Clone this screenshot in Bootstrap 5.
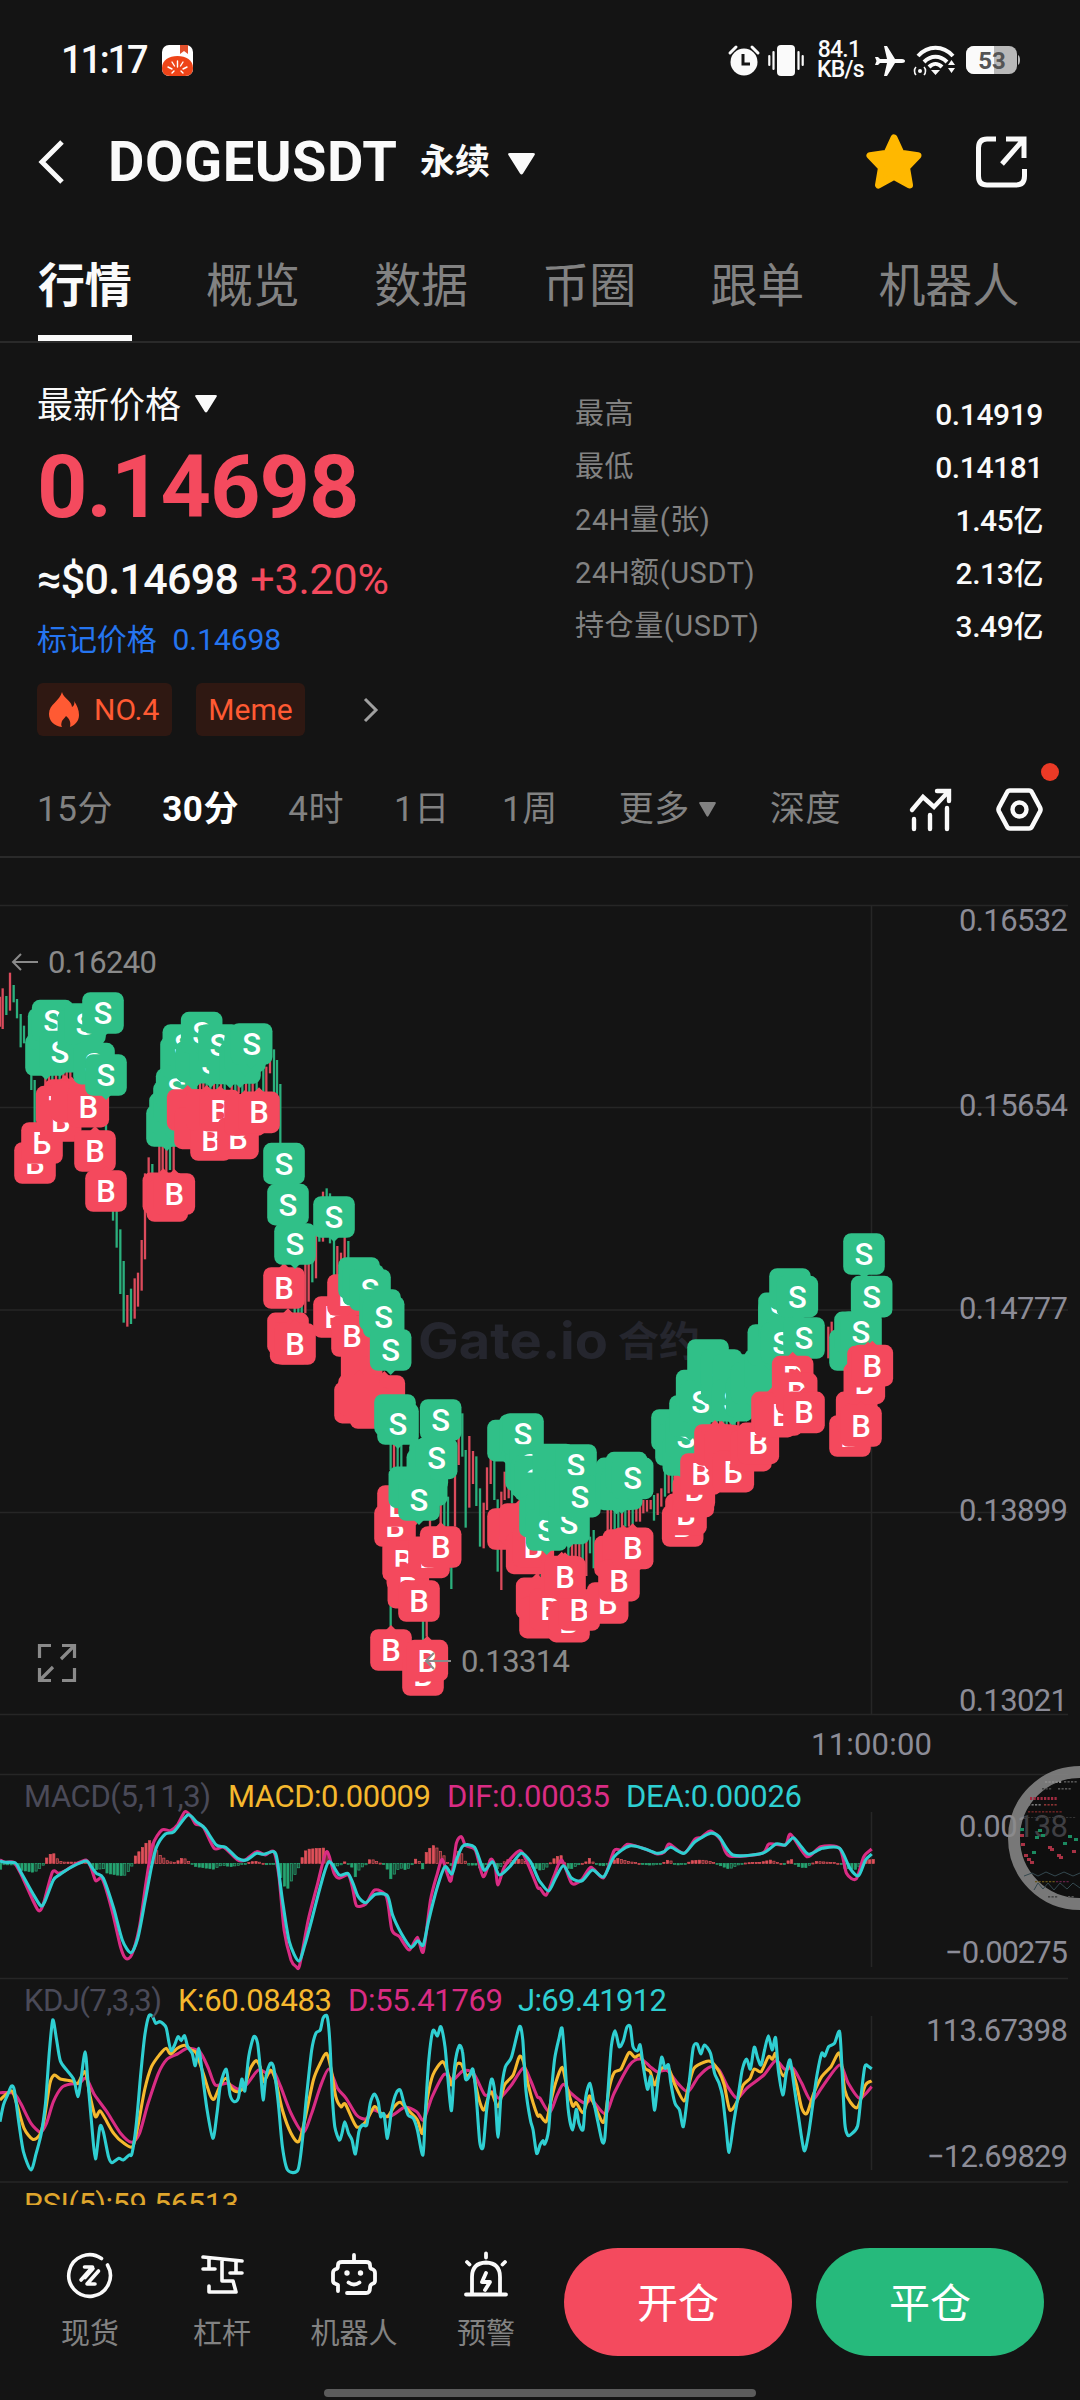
<!DOCTYPE html>
<html lang="zh-CN">
<head>
<meta charset="utf-8">
<meta name="viewport" content="width=device-width, initial-scale=1">
<title>DOGEUSDT 永续</title>
<link href="https://cdn.jsdelivr.net/npm/bootstrap@5.3.0/dist/css/bootstrap.min.css" rel="stylesheet">
<style>
:root{--ink:#141414;--up:#f44a5e;--down:#26ba7c;--dim:#828282}
body{background:var(--ink);color:#fafafa;font-family:Roboto,"Noto Sans CJK SC",sans-serif;width:1080px;height:2400px;overflow:hidden;line-height:1}
svg{display:block;overflow:visible}
.dim{color:var(--dim)}
.statusbar{height:112px;padding:8px 60px 0 61px}
.clock{font-size:38px;letter-spacing:-2.2px;font-weight:500;width:85px;white-space:nowrap}
.netspeed{font-size:23px;line-height:20px;width:44px;font-weight:500;letter-spacing:-.8px}
.titlebar{height:98px;padding:2px 53px 0 38px}
.pair{font-size:56px;font-weight:700;letter-spacing:.5px;margin-left:43px;line-height:60px;width:299px;white-space:nowrap}
.kind{font-size:35px;font-weight:700;margin-left:13px}
.maintabs{height:133px;gap:74.500px;padding:50px 0 0 38px;border-bottom:2px solid #2a2a2a;font-size:47px}
.maintabs div{height:81px;line-height:52px;white-space:nowrap;letter-spacing:-.2px}
.maintabs .on{color:#fafafa;font-weight:700;border-bottom:6px solid #fafafa}
.quote{height:413px;padding:0 37px 0 37px}
.lefthalf{width:538px}
.lastlbl{font-size:36px;line-height:44px;margin-top:41px;gap:14px}
.bigprice{font-size:88px;font-weight:700;line-height:88px;color:var(--up);margin-top:15px;letter-spacing:-1px}
.usd{font-size:43px;line-height:50px;margin-top:23px;gap:12px;font-weight:500}
.usd span{letter-spacing:-.7px}
.usd span+span{letter-spacing:-.2px}
.mark-row{font-size:30px;line-height:36px;margin-top:18px;gap:16px;color:#2575f0;letter-spacing:-.1px}
.tags{margin-top:25px}
.tagbox{height:53px;border-radius:6px;background:#2f1812;color:#ff5a33;font-size:30px}
.stats{margin-top:45px;font-size:29px}
.stats .d-flex{height:53px;line-height:53px}
.stats span:first-child{letter-spacing:.6px}
.stats span:last-child{font-weight:500;font-size:30px;letter-spacing:-.4px}
.periods{height:102px;border-bottom:2px solid #2a2a2a;font-size:35px;letter-spacing:.6px;padding:6px 37px 0 37px;white-space:nowrap}
.reddot{width:18px;height:18px;border-radius:50%;background:#ea3a26;right:-16px;top:-25px}
.charts{height:1347px;overflow:hidden}
.footbar{height:195px;padding:43px 36px 0 24px}
.navcell{width:132px;font-size:29px;color:var(--dim);white-space:nowrap}
.navcell svg{margin:4px 0 22px}
.pillbtn{width:228px;height:108px;border-radius:54px;color:#fff;font-size:41px;padding-top:4px}
.homebar{position:absolute;left:324px;top:2389px;width:432px;height:8px;border-radius:4px;background:#5c5c5c}
.phone{width:1080px;height:2400px;overflow:hidden}
.bubble{left:1008px;top:1766px}
</style>
<script src="https://cdn.jsdelivr.net/npm/bootstrap@5.3.0/dist/js/bootstrap.bundle.min.js"></script>
</head>
<body>
<div class="phone position-relative d-flex flex-column">

  <header class="statusbar d-flex align-items-center justify-content-between">
    <div class="d-flex align-items-center">
      <span class="clock">11:17</span>
      <svg class="ms-3" width="31" height="31" viewBox="0 0 31 31"><rect width="31" height="31" rx="7" fill="#fff"/><path d="M18 0h8v9l-4-3-4 3z" fill="#e2502c"/><path d="M0 23C0 15 7 11 15.500 11S31 15 31 23c0 5-3 8-8 8H8c-5 0-8-3-8-8z" fill="#ee4418"/><path d="M15.500 16v6M10 17l2.500 4M21 17l-2.500 4M6 22l4 2M25 22l-4 2M10 28l2-2M21 28l-2-2" stroke="#fff" stroke-width="1.400" stroke-linecap="round"/></svg>
    </div>
    <div class="d-flex align-items-center">
      <svg width="32" height="31" viewBox="0 0 32 31"><circle cx="16" cy="17" r="13.500" fill="#fafafa"/><path d="M2 8l6-6M30 8l-6-6" stroke="#fafafa" stroke-width="3" stroke-linecap="round"/><path d="M15 9v10h7" fill="none" stroke="#141414" stroke-width="3"/></svg>
      <svg style="margin-left:8px" width="36" height="31" viewBox="0 0 36 31"><rect x="9" y="0" width="18" height="31" rx="4" fill="#fafafa"/><path d="M5.500 7v17M30.500 7v17M1.300 11v9M34.700 11v9" stroke="#fafafa" stroke-width="2.200" stroke-linecap="round"/></svg>
      <div class="netspeed text-center" style="margin-left:13px">84.1<br>KB/s</div>
      <svg style="margin-left:14px" width="30" height="31" viewBox="0 0 30 31"><path d="M0 12l3 0 2 2h7L9 1h3l8 13h7c4 0 4 4 0 4h-7l-8 13H9l3-13H5l-2 2H0l1.500-4z" fill="#fafafa"/></svg>
      <svg style="margin-left:9px" width="42" height="31" viewBox="0 0 42 31"><g fill="none" stroke="#fafafa" stroke-width="4"><path d="M4 11c10-11 25-11 35 0M10 17c7-7 16-7 23 0M15 22c4-4 9-4 13 0"/></g><path d="M17 25h9l-4.500 5zM34 20l3.500-5 3.500 5zM34 23l3.500 5 3.500-5z" fill="#fafafa"/><circle cx="6" cy="26" r="2" fill="#fafafa"/><path d="M2 22c-2 2-2 6 0 8M10 22c2 2 2 6 0 8" fill="none" stroke="#fafafa" stroke-width="1.600"/></svg>
      <svg style="margin-left:10px" width="54" height="28" viewBox="0 0 54 28"><rect width="51" height="28" rx="8" fill="#b9b9b9"/><path d="M8 0h20v28H8a8 8 0 01-8-8V8a8 8 0 018-8z" fill="#fafafa"/><path d="M52 9q2 1 2 5t-2 5z" fill="#b9b9b9"/><text x="26" y="22.500" text-anchor="middle" font-size="24" font-weight="700" fill="#555">53</text></svg>
    </div>
  </header>

  <div class="titlebar d-flex align-items-center">
    <svg width="27" height="44" viewBox="0 0 27 44"><path d="M24 2L4 22l20 20" fill="none" stroke="#fafafa" stroke-width="5"/></svg>
    <span class="pair">DOGEUSDT</span>
    <span class="kind">永续</span>
    <svg style="margin-left:18px;margin-top:4px" width="27" height="22" viewBox="0 0 27 22"><path d="M2 0h23q3 0 1.300 2.500L15 20.500q-1.500 2-3 0L.7 2.500Q-1 0 2 0z" fill="#fafafa"/></svg>
    <svg class="ms-auto" width="58" height="57" viewBox="0 0 58 57"><path d="M29 4l7 15.200L53 21.600 41.500 33.500 44.500 51 29 42.500 13.500 51l3-17.500L5 21.600l17-2.400z" fill="#ffb800" stroke="#ffb800" stroke-width="7" stroke-linejoin="round"/></svg>
    <svg style="margin-left:53px" width="51" height="52" viewBox="0 0 51 52"><path d="M20 3H11q-8.500 0-8.500 9v28q0 9 8.500 9h29q8.500 0 8.500-9v-7M30 3h18v19M47 4L26 28" fill="none" stroke="#fafafa" stroke-width="5"/></svg>
  </div>

  <nav class="maintabs d-flex dim">
    <div class="on">行情</div><div>概览</div><div>数据</div><div>币圈</div><div>跟单</div><div>机器人</div>
  </nav>

  <section class="quote d-flex">
    <div class="lefthalf">
      <div class="lastlbl d-flex align-items-center">最新价格 <svg style="margin-top:-4px" width="22" height="18" viewBox="0 0 27 22"><path d="M2 0h23q3 0 1.300 2.500L15 20.500q-1.500 2-3 0L.7 2.500Q-1 0 2 0z" fill="#fafafa"/></svg></div>
      <div class="bigprice">0.14698</div>
      <div class="usd d-flex"><span>≈$0.14698</span><span style="color:var(--up)" class="fw-normal">+3.20%</span></div>
      <div class="mark-row d-flex"><span>标记价格</span><span>0.14698</span></div>
      <div class="tags d-flex align-items-center">
        <div class="tagbox d-flex align-items-center" style="padding:0 13px 0 12px;gap:15px">
          <svg width="30" height="35" viewBox="0 0 30 35"><path d="M13 0c1 6 10 9 10 15 2-1 3-4 2-6 3 4 5 9 5 14 0 6-4 10-9 12 1-4 0-8-4-11-1 2-3 3-4 5-1 3-1 4 0 6C5 34 0 29 0 22 0 12 11 9 13 0z" fill="#ff5a33"/></svg>
          <span>NO.4</span></div>
        <div class="tagbox d-flex align-items-center" style="margin-left:24px;padding:0 12px">Meme</div>
        <svg style="margin-left:58px" width="15" height="24" viewBox="0 0 15 24"><path d="M2 1l11 11L2 23" fill="none" stroke="#a0a0a0" stroke-width="3"/></svg>
      </div>
    </div>
    <div class="stats flex-grow-1">
      <div class="d-flex justify-content-between"><span class="dim">最高</span><span>0.14919</span></div>
      <div class="d-flex justify-content-between"><span class="dim">最低</span><span>0.14181</span></div>
      <div class="d-flex justify-content-between"><span class="dim">24H量(张)</span><span>1.45亿</span></div>
      <div class="d-flex justify-content-between"><span class="dim">24H额(USDT)</span><span>2.13亿</span></div>
      <div class="d-flex justify-content-between"><span class="dim">持仓量(USDT)</span><span>3.49亿</span></div>
    </div>
  </section>

  <nav class="periods d-flex align-items-center dim">
    <span>15分</span><span class="fw-bold text-white" style="margin-left:49px">30分</span><span style="margin-left:49px">4时</span><span style="margin-left:50px">1日</span><span style="margin-left:52px">1周</span>
    <span style="margin-left:61px">更多</span><svg style="margin-left:9px" width="17" height="15" viewBox="0 0 27 22" preserveAspectRatio="none"><path d="M2 0h23q3 0 1.300 2.500L15 20.500q-1.500 2-3 0L.7 2.500Q-1 0 2 0z" fill="#828282"/></svg>
    <span style="margin-left:54px">深度</span>
    <svg class="ms-auto" width="42" height="43" viewBox="0 0 42 43"><path d="M2 22L13 9l11 10L38 4M27 3h12v10M4 31v10M20 27v14M37 20v21" fill="none" stroke="#fafafa" stroke-width="4.400" stroke-linecap="round"/></svg>
    <span class="position-relative" style="margin-left:44px"><svg width="47" height="43" viewBox="0 0 47 43"><path d="M14 2.500h19q2 0 3 2l8 15q1 2 0 4l-8 15q-1 2-3 2H14q-2 0-3-2l-8-15q-1-2 0-4l8-15q1-2 3-2z" fill="none" stroke="#fafafa" stroke-width="4.600"/><circle cx="23.500" cy="21.500" r="7" fill="none" stroke="#fafafa" stroke-width="4.400"/></svg><i class="reddot position-absolute"></i></span>
  </nav>

  <main class="charts"><svg id="plot" width="1080" height="1347" viewBox="0 858 1080 1347"></svg></main>

  <footer class="footbar d-flex">
    <div class="navcell d-flex flex-column align-items-center"><svg width="46" height="46" viewBox="0 0 46 46"><g fill="none" stroke="#fafafa" stroke-width="3.600" stroke-linecap="round" stroke-linejoin="round"><path d="M34.500 6.500A20.800 20.800 0 1040.500 13"/><path d="M17.500 15h8L14 28M31.500 19L20 32h8M26 16.500l-8 9"/></g></svg>现货</div>
    <div class="navcell d-flex flex-column align-items-center"><svg width="46" height="46" viewBox="0 0 46 46"><path d="M4 5l39 4M10 6v10M4 17h12M37 9v11M31 21h12M23 7v22h11l3 11H10v-6" fill="none" stroke="#fafafa" stroke-width="3.600" stroke-linecap="round" stroke-linejoin="round"/></svg>杠杆</div>
    <div class="navcell d-flex flex-column align-items-center"><svg width="48" height="46" viewBox="0 0 48 46"><g fill="none" stroke="#fafafa" stroke-width="3.800" stroke-linecap="round"><path d="M24 3v7M8 39v-6l-2-1q-3-1-3-3v-8q0-3 3-4 2 0 2-4 0-3 4-3h24q4 0 4 3 0 4 2 4 3 1 3 4v8q0 2-3 3-2 1-2 4 0 5-4 5H17" stroke-linejoin="round"/><path d="M18.500 30.500q5.500 4 11 0"/></g><circle cx="17" cy="21" r="2.700" fill="#fafafa"/><circle cx="30.500" cy="21" r="2.700" fill="#fafafa"/></svg>机器人</div>
    <div class="navcell d-flex flex-column align-items-center"><svg width="44" height="46" viewBox="0 0 44 46"><path d="M22 1.500v4M3 10l2.500 2.500M41 10l-2.500 2.500M8 41V25q0-14 14-14.500Q36 11 36 25v16M2 42.500h40M22 21l-4 9h8l-5 8" fill="none" stroke="#fafafa" stroke-width="3.800" stroke-linecap="round" stroke-linejoin="round"/></svg>预警</div>
    <div class="pillbtn d-flex align-items-center justify-content-center" style="background:var(--up);margin-left:12px">开仓</div>
    <div class="pillbtn d-flex align-items-center justify-content-center" style="background:var(--down);margin-left:24px">平仓</div>
  </footer>
  <i class="homebar"></i>

  <svg class="bubble position-absolute" width="144" height="144" viewBox="0 0 144 144"><circle cx="72" cy="72" r="60" fill="#0c0c0c" fill-opacity=".6"/><circle cx="72" cy="72" r="66" fill="none" stroke="#8a8a8a" stroke-opacity=".85" stroke-width="12"/><g id="mini"></g></svg>
</div>

<script>
const out = [];
const RED = '#f4495d', GRN = '#30c088', LINE = '#262626';
const put = s => out.push(s);
const hline = y => put(`<path d="M0 ${y}H1068" stroke="${LINE}" stroke-width="1.300"/>`);
const vline = (a, b) => put(`<path d="M871.500 ${a}V${b}" stroke="${LINE}" stroke-width="1.500"/>`);
const label = (x, y, w, t, c) => put(`<text x="${x}" y="${y}" textLength="${w}" font-size="31" fill="${c}">${t}</text>`);

/* grid */
[905.5, 1107.5, 1310, 1512.5, 1714.5, 1774.5, 1978.5, 2182].forEach(hline);
vline(905, 1715); vline(1812, 1967); vline(2016, 2170);
put('<text x="418" y="1359" textLength="190" lengthAdjust="spacingAndGlyphs" font-family="Inter,sans-serif" font-size="51" font-weight="700" fill="#25262e">Gate.io</text><text x="618" y="1356" font-size="41" font-weight="700" fill="#25262e">合约</text>');

/* candles: origin, then colour x top bottom in thirds of a pixel */
const views = {A:[0,880], C:[250,1080], E:[320,1340], F:[600,1180]};
const candles = {
A:`r 0 350 440,r 8 325 447,g 19 348 405,r 30 278 392,g 41 315 367,g 51 357 415,g 62 402 502,g 72 437 490,g 94 560 630,g 104 600 750,r 136 580 625,r 147 580 625,g 157 580 625,r 168 580 625,g 179 580 625,r 190 570 625,r 200 570 625,r 211 570 625,g 318 640 760,g 339 980 1022,g 350 980 1103,g 361 1048 1242,g 371 1143 1328,r 382 1245 1340,g 393 1226 1332,r 404 1195 1316,r 414 1178 1280,r 425 1080 1232,r 435 880 1138,r 446 832 900,g 457 852 900,r 478 790 880,r 488 790 880,r 499 790 880,g 510 780 870,r 521 780 880,r 600 600 640,r 610 600 640,g 620 600 640,g 631 600 640,r 642 600 640,g 652 600 640,r 663 600 640,g 674 600 640,r 695 600 640,g 706 600 640,r 716 600 640,g 727 600 640,r 738 600 640,g 748 600 640,r 758 600 640,g 770 600 640,g 790 560 640,r 799 560 640,r 810 540 580,g 822 508 640,g 831 540 650,g 841 612 800,r 850 1140 1170,g 884 1270 1300,g 895 1270 1300,g 905 1270 1300,r 916 1150 1300,r 926 1150 1265,g 937 1140 1207,r 948 1060 1195,g 958 1050 1085,r 969 935 1085,g 980 925 1000,g 990 940 1090,g 1002 1070 1190,r 1012 1098 1190,r 1023 1118 1190,r 1034 1060 1190,g 1045 1083 1190`,
E:`g 212 300 390,r 222 300 390,g 233 300 390,g 244 300 390,g 212 780 860,g 309 830 905,r 320 830 890,r 330 520 570,r 362 440 560,g 373 440 560,g 384 470 560,g 394 680 747,r 405 380 560,r 416 290 375,g 427 220 350,g 437 330 563,r 448 288 503,r 459 333 432,g 469 349 498,g 480 445 620,r 491 488 625,r 501 382 510,r 512 350 432,g 523 350 480,g 533 478 695,r 544 455 750,r 554 395 480,r 566 430 475,g 576 430 490,g 665 680 720,r 655 680 720,g 745 590 670,r 756 590 670,r 767 590 670,r 778 590 670,g 788 590 670,r 799 590 708,g 810 590 640,g 821 570 685,r 863 500 600,r 873 500 600,g 884 500 580,g 895 500 580,r 906 500 570,g 916 480 560,r 927 480 560,g 938 480 560,r 949 480 545,r 960 480 545,r 970 480 520,r 981 480 515,r 992 480 508,g 1002 465 542,r 1013 460 525,r 1024 445 500,g 1035 390 470,r 1046 390 460,g 1057 390 455`,
F:`g 350 720 745,r 360 720 745,g 370 720 745,g 380 715 745,r 392 715 745,g 404 715 745,r 415 715 745,r 685 440 535,r 695 425 470`};
for (const k in candles) for (const c of candles[k].split(',')) {
  const [t, x, a, b] = c.split(' ');
  const [ox, oy] = views[k];
  put(`<path d="M${ox + x / 3} ${oy + a / 3}V${oy + b / 3}" stroke="${t == 'r' ? '#dc4b5c' : '#2bb07d'}" stroke-width="2.300"/>`);
}

/* trade markers: upper case shows its letter */
const marks = [
['A',`B 105 849,s 138 525,s 146 447,B 126 789,S 158 422,b 195 660,B 170 680,S 180 515,s 235 452,B 182 723,b 215 665,S 255 432,B 265 680,S 282 551,S 309 399,S 318 585,B 285 813,B 318 933,s 501 738,s 510 700,s 522 665,S 530 627,s 543 532,S 550 495,s 590 545,S 632 548,S 605 458,s 690 550,S 657 495,s 720 549,s 735 515,S 755 492,b 563 690,b 585 745,B 633 780,b 620 690,B 660 692,B 714 775,b 735 705,B 777 697,b 490 940,b 502 963,B 523 942,B 852 1224,S 852 851,S 864 974,S 885 1092,b 864 1360,b 872 1390,B 885 1392,S 1002 1011`],
['C',`B 252 711,B 294 645,b 335 860,B 306 768,b 403 948,b 315 968,b 362 984,b 327 945,s 327 594,s 340 615,S 360 630,s 390 690,S 401 711,S 422 810`],
['E',`B 225 558,B 234 498,B 250 662,b 262 690,B 250 662,B 265 743,B 297 783,B 327 652,B 362 621,s 225 225,S 234 252,S 362 240,s 322 390,s 320 435,s 330 360,S 350 355,s 268 442,S 297 480,B 213 930,B 309 1005,B 322 962,B 564 567,b 600 552,b 620 640,B 640 620,b 650 775,b 660 833,B 690 808,B 747 845,B 778 810,b 725 710,B 735 712,s 564 302,s 600 285,s 618 390,S 609 282,S 630 375,s 635 410,S 645 420,s 665 460,s 660 530,s 700 374,S 680 515,s 705 475,S 680 570,s 765 400,s 720 480,S 747 550,s 740 440,S 768 375,s 765 468,S 780 470,s 890 415,S 890 448,s 905 447,s 920 398,S 938 415,B 863 789,B 885 650,b 910 630,B 897 722,B 938 625`],
['F',`B 248 1038,B 258 1003,b 280 950,B 283 930,s 216 750,s 228 795,s 250 825,S 258 770,s 270 708,s 290 632,S 302 665,s 324 540,s 365 610,S 365 570,s 400 585,S 398 662,s 440 650,s 455 610,s 495 570,s 505 495,s 537 420,S 537 400,s 560 470,s 570 327,S 545 490,S 592 350,S 612 474,B 303 882,b 345 795,B 365 797,b 375 810,B 400 875,b 453 812,B 475 790,b 516 697,b 525 710,B 545 705,B 578 590,B 590 640,B 612 697,S 792 222,S 815 350,s 750 510,s 765 457,S 783 457,B 750 768,b 770 697,B 793 610,b 804 560,B 783 738,B 817 557`]];
for (const [k, list] of marks) for (const m of list.split(',')) {
  const [t, zx, zy] = m.split(' '), [ox, oy] = views[k];
  const x = ox + zx / 3, y = oy + zy / 3, sell = t.toLowerCase() == 's', d = sell ? 1 : -1;
  put(`<g fill="${sell ? GRN : RED}"><rect x="${x - 20.8}" y="${y - 20.8}" width="41.600" height="41.600" rx="8"/><path d="M${x - 5} ${y + 20 * d}h10l-5 ${5 * d}z"/></g>`);
  if (t < 'a') put(`<text x="${x}" y="${y + 11}" font-size="31" font-weight="500" text-anchor="middle" fill="#fff">${t}</text>`);
}

/* extremes, scale, expand icon */
const arrow = (x, y) => put(`<path d="M${x + 26} ${y}H${x + 1}M${x + 9} ${y - 8}L${x + 1} ${y}l8 8" fill="none" stroke="#8a8a8a" stroke-width="2"/>`);
arrow(12, 962); label(48, 973, 109, '0.16240', '#8a8a8a');
arrow(425, 1661); label(461, 1672, 109, '0.13314', '#8a8a8a');
const AX = '#8c8c97';
[['0.16532', 931], ['0.15654', 1116], ['0.14777', 1319], ['0.13899', 1521], ['0.13021', 1711], ['0.00138', 1837]].forEach(([t, y]) => label(959, y, 109, t, AX));
label(945, 1963, 123, '−0.00275', AX);
label(926, 2041, 142, '113.67398', AX); label(927, 2167, 141, '−12.69829', AX);
label(811, 1755, 121, '11:00:00', AX);
put('<path d="M51 1645.500H39.500V1658M62 1645.500H74.500V1658M39.500 1668v12.500H51M74.500 1668v12.500H62M74 1646l-13 13M40 1680l13-13" fill="none" stroke="#8a8a8a" stroke-width="3.200"/>');

/* indicators */
const join = (a, b) => [...a.split(' ').map(p => p.split(',').map(Number)), ...b.split(' ').map(p => { const q = p.split(',').map(Number); return [q[0] + 1568, q[1]]; })];
function curve(pts, oy, col) {
  const p = pts.map(([x, y]) => [x * .3444, oy + y / 3]);
  let d = `M${p[0]}`;
  for (let i = 0; i < p.length - 1; i++) {
    const a = p[Math.max(i - 1, 0)], b = p[i], c = p[i + 1], e = p[Math.min(i + 2, p.length - 1)], k = .13;
    const f = n => n.toFixed(1);
    d += `C${f(b[0] + (c[0] - a[0]) * k)} ${f(b[1] + (c[1] - a[1]) * k)} ${f(c[0] - (e[0] - b[0]) * k)} ${f(c[1] - (e[1] - b[1]) * k)} ${f(c[0])} ${f(c[1])}`;
  }
  put(`<path d="${d}" fill="none" stroke="${col}" stroke-width="3.100" stroke-linejoin="round"/>`);
}
const PINK = '#d92c84', CYAN = '#2fcfd2', YEL = '#f5b82e';

const hist = join('0,-20 12,-4 50,-5 60,-20 100,-27 122,-10 130,0 132,12 153,34 168,12 180,4 225,4 250,3 262,-4 275,-20 300,-15 312,-30 360,-38 375,-22 386,-3 390,18 412,45 432,70 445,60 460,28 490,5 510,3 532,18 550,4 560,-3 570,-10 620,-17 645,-5 670,-10 700,-4 740,7 760,2 775,-4 795,-3 812,-15 818,-60 835,-77 848,-50 870,-8 875,12 890,42 940,46 955,30 960,5 970,-10 990,-5 1000,5 1015,-3 1025,-15 1032,-40 1045,-15 1065,-3 1075,14 1090,8 1100,2 1120,-4 1135,-46 1160,-12 1180,-20 1195,-8 1205,14 1218,5 1228,-17 1236,30 1256,55 1275,42 1290,22 1305,-8 1315,-5 1325,40 1345,26 1355,-5 1385,-5 1400,-22 1412,-5 1425,12 1435,2 1446,-20 1455,-8 1470,12 1490,8 1510,14 1530,4 1545,-10 1568,-20',
'10,-18 25,-8 35,10 60,26 70,5 85,-20 110,-5 135,5 145,16 155,3 180,-8 195,-5 205,5 225,15 255,6 280,2 300,-3 320,-5 350,-3 375,12 395,-5 420,-3 440,8 470,10 500,5 520,-5 550,-17 575,-5 600,2 640,3 670,10 690,3 710,-3 728,15 745,-8 770,-14 785,-4 800,6 830,4 860,2 875,-3 885,-15 920,-18 935,0 945,10 975,12');
let j = 0, prev = 0;
for (let x = 2; x < 2540; x += 10.3) {
  while (j < hist.length - 2 && hist[j + 1][0] < x) j++;
  const [a, b] = [hist[j], hist[j + 1]], h = (a[1] + (b[1] - a[1]) * (x - a[0]) / (b[0] - a[0])) / 3;
  const top = h > 0 ? 1863.4 - h : 1863.4, grow = Math.abs(h) >= Math.abs(prev), c = h > 0 ? '#e0505a' : '#25a471';
  put(`<rect x="${(x * .3444 - 1.200).toFixed(1)}" y="${top.toFixed(1)}" width="2.200" height="${Math.max(Math.abs(h), 1).toFixed(1)}" fill="${c}" fill-opacity="${grow ? 1 : .35}" stroke="${c}" stroke-width=".7"/>`);
  prev = h;
}
curve(join('0,480 15,487 40,487 62,525 95,600 112,632 125,615 152,517 170,520 190,512 215,495 250,480 265,505 278,542 297,537 325,630 350,740 365,775 382,765 405,680 425,540 443,435 470,390 495,392 515,375 537,335 555,350 568,372 590,380 622,445 650,442 690,480 712,480 745,455 770,465 795,455 810,530 825,690 845,780 860,800 870,796 895,660 920,560 948,455 970,520 985,535 1012,525 1025,570 1035,617 1062,612 1088,570 1122,590 1138,690 1160,710 1188,750 1212,712 1229,755 1250,600 1270,520 1284,478 1300,525 1310,540 1325,430 1340,410 1352,437 1380,450 1403,530 1425,478 1438,500 1446,555 1465,500 1508,452 1530,485 1560,560',
'0,565 18,585 40,530 63,480 92,550 120,540 148,502 185,533 215,452 235,450 255,433 305,447 340,462 362,455 375,432 418,460 450,417 468,412 495,393 525,420 550,468 645,460 665,432 712,435 728,403 775,470 815,440 870,445 890,520 918,537 940,470 963,447'), 1700, PINK);
curve(join('0,483 15,487 45,489 60,515 95,580 118,617 130,605 155,540 175,523 210,500 250,483 265,500 280,520 300,535 330,625 355,720 380,758 400,715 420,610 440,500 455,440 480,402 505,395 545,345 570,365 595,385 628,435 655,442 690,475 715,480 745,460 765,463 795,455 805,480 820,600 840,725 867,783 885,735 905,660 930,560 955,485 985,525 1010,520 1025,550 1040,590 1062,608 1090,583 1125,587 1140,645 1165,700 1193,742 1213,722 1229,735 1245,660 1270,560 1292,500 1312,522 1325,480 1345,437 1378,442 1405,510 1430,485 1450,525 1480,500 1513,460 1540,485 1560,530',
'0,545 25,573 45,535 68,497 92,535 122,542 152,510 185,530 215,470 260,438 305,447 340,460 360,455 380,442 418,460 450,425 495,400 520,410 560,465 645,460 685,432 712,435 735,413 755,435 780,463 820,445 870,445 900,505 925,527 945,480 963,462'), 1700, CYAN);
curve(join('0,368 40,370 60,400 90,460 118,487 135,460 155,395 180,352 205,342 230,340 250,325 275,375 310,425 350,490 382,517 405,490 430,400 460,310 485,268 515,252 545,235 580,245 605,295 625,345 660,340 690,357 715,345 750,300 775,310 795,305 815,350 845,430 880,487 905,430 930,350 955,297 980,355 1005,385 1035,435 1062,447 1085,420 1130,440 1175,412 1210,425 1230,450 1255,380 1290,313 1315,330 1345,302 1375,310 1408,375 1430,365 1450,385 1485,345 1520,293 1540,330 1560,380',
'0,385 28,427 50,375 68,343 90,370 130,400 150,390 190,432 215,370 260,285 292,267 320,290 340,305 370,302 400,340 430,365 460,320 495,290 520,300 545,350 572,385 600,355 650,315 684,272 710,297 735,295 760,340 788,393 820,350 870,285 895,340 928,385 963,350'), 1970, PINK);
curve(join('0,390 33,362 48,400 70,475 95,508 115,495 128,450 145,340 158,315 175,327 210,333 226,340 247,305 262,380 277,440 290,422 305,445 330,490 360,520 385,530 400,470 420,360 440,290 465,252 483,235 495,252 515,235 537,226 555,240 570,250 590,310 610,375 622,387 640,345 657,325 672,355 690,365 710,350 725,300 743,272 755,290 766,335 785,300 800,330 820,420 845,490 867,515 885,450 910,330 930,280 948,250 962,300 975,380 990,410 1003,403 1035,470 1062,455 1087,410 1105,430 1125,440 1145,410 1162,397 1190,425 1212,450 1227,490 1240,390 1257,315 1284,275 1298,300 1311,345 1325,285 1340,283 1355,318 1373,310 1390,385 1405,420 1425,365 1446,410 1465,345 1490,315 1508,260 1520,275 1535,350 1560,435',
'0,435 18,455 30,400 45,340 64,292 78,350 95,408 105,398 125,428 143,378 160,410 185,457 200,360 215,308 235,297 258,248 275,262 291,255 305,295 320,305 333,345 350,298 373,295 390,340 418,393 432,345 447,295 480,275 497,275 520,305 535,345 551,420 572,395 590,345 610,325 622,297 642,305 663,260 675,268 684,250 695,295 708,318 726,285 745,345 760,415 775,430 795,370 818,320 845,290 870,250 885,360 900,395 922,412 945,345 963,333'), 1970, YEL);
curve(join('0,455 10,405 22,375 33,348 42,362 55,460 68,545 90,600 105,550 120,490 132,400 143,250 153,150 163,200 175,272 195,302 215,330 226,380 235,330 247,245 255,330 266,460 277,567 290,470 300,485 315,560 325,578 345,565 358,570 375,555 383,552 395,470 408,320 420,200 432,138 443,140 452,160 465,155 482,172 490,215 497,242 507,225 517,200 526,212 536,197 545,230 558,250 567,287 577,235 585,290 600,410 618,505 630,430 640,345 657,298 668,375 680,395 692,385 702,327 711,362 722,260 737,200 748,220 757,310 764,390 772,320 785,280 795,295 808,400 820,530 835,600 865,600 878,510 890,380 905,240 917,190 930,180 938,145 950,140 958,220 965,380 972,470 985,510 993,490 1001,455 1012,490 1022,510 1032,552 1042,485 1052,465 1065,465 1075,400 1087,372 1098,395 1105,440 1115,432 1125,505 1137,420 1150,370 1162,360 1172,395 1185,435 1200,445 1212,480 1228,555 1235,430 1245,270 1257,182 1270,198 1280,170 1292,230 1300,320 1311,422 1320,290 1333,228 1343,245 1352,327 1365,315 1373,298 1382,370 1393,515 1403,530 1413,420 1427,328 1437,370 1446,502 1455,370 1467,292 1485,262 1508,170 1518,210 1527,360 1540,450 1548,480 1558,550',
'0,525 8,512 14,522 25,480 32,380 42,270 55,205 64,175 72,270 82,420 95,480 105,418 113,460 125,478 133,380 145,340 155,390 165,440 180,513 188,505 197,370 207,230 218,182 230,230 242,212 252,172 262,170 270,230 283,243 291,225 300,290 312,358 322,320 332,420 342,340 353,262 363,295 373,285 380,340 392,400 405,420 416,470 427,390 435,320 445,232 456,222 467,252 477,225 495,250 507,310 520,340 530,380 540,470 549,547 562,460 575,380 587,300 600,267 611,297 622,232 632,265 642,285 652,240 663,197 674,240 684,203 692,300 705,375 715,310 726,270 738,350 752,450 767,542 780,490 795,380 805,310 818,250 827,258 838,230 855,220 870,185 877,300 885,460 893,495 903,493 922,468 932,380 943,290 955,290 963,297'), 1970, CYAN);

const MUTE = '#4a4a58';
label(24, 1807, 187, 'MACD(5,11,3)', MUTE); label(228, 1807, 203, 'MACD:0.00009', YEL);
label(447, 1807, 163, 'DIF:0.00035', PINK); label(626, 1807, 176, 'DEA:0.00026', CYAN);
label(24, 2011, 138, 'KDJ(7,3,3)', MUTE); label(178, 2011, 154, 'K:60.08483', YEL);
label(348, 2011, 155, 'D:55.41769', PINK); label(518, 2011, 149, 'J:69.41912', CYAN);
label(24, 2215, 215, 'RSI(5):59.56513', '#dfa52c');
document.getElementById('plot').innerHTML = out.join('');

/* tiny page preview inside the floating bubble */
const px = [];
const dash = (x, y, w, c, h = 1.6) => px.push(`<rect x="${x}" y="${y}" width="${w}" height="${h}" fill="${c}"/>`);
const dots = (x, y, w, c, h) => { for (let i = 0; i < w; i += 3.5) dash(x + i, y, 2.2, c, h); };
dots(37, 15, 16, '#888', 2); dots(56, 15, 12, '#555'); dots(34, 22, 8, '#444'); dots(50, 22, 12, '#555');
dots(22, 31, 28, '#a02a40', 3); dots(20, 38, 14, '#777'); dots(36, 38, 14, '#833'); dots(20, 45, 32, '#622'); dots(16, 51, 50, '#333', 1);
[[12,62],[30,63],[27,70],[60,69],[55,76],[33,68],[66,72],[24,85]].forEach(p => dash(p[0], p[1], 4, '#1b8a60', 3));
[[12,68],[13,77],[16,88],[19,92],[22,95],[42,82],[49,88],[51,90],[40,80],[64,84]].forEach(p => dash(p[0], p[1], 4, '#a83245', 3));
px.push('<path d="M16 110l8-3 6 3 8-4 9 4 9-4 9 4 7-3M26 124l4-7 5 6 5-6 6 7 6-7 7 6 6-6 7 5" fill="none" stroke="#34484f" stroke-width="1"/>');
dots(27, 115, 18, '#665418', 1.3); dots(48, 115, 12, '#622046', 1.3); dots(40, 130, 10, '#444'); dots(60, 130, 6, '#555');
document.getElementById('mini').innerHTML = px.join('');
</script>
</body>
</html>
